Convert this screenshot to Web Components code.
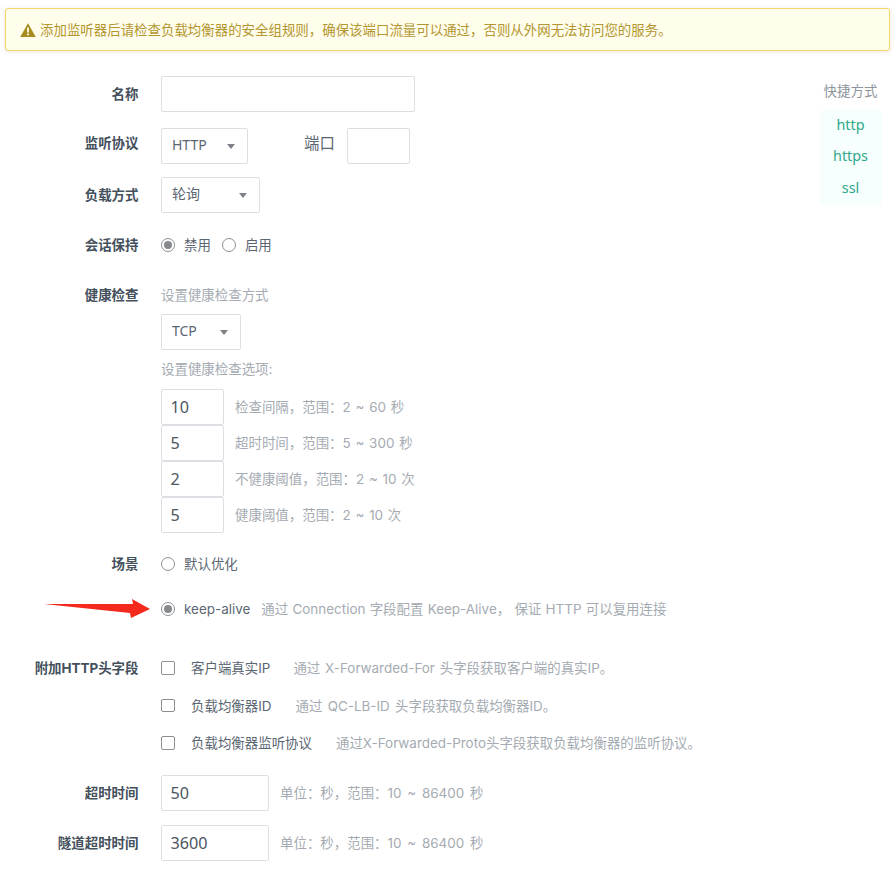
<!DOCTYPE html>
<html lang="zh-CN">
<head>
<meta charset="utf-8">
<style>
html,body{margin:0;padding:0;background:#fff}
body{font:13.45px/24px Inter,"Noto Sans CJK SC",sans-serif;color:#5b6672}
</style>
</head>
<body>
<x-app></x-app>
<template id="t-app">
<style>
:host{display:block;width:895px;height:874px;overflow:hidden;box-sizing:border-box;padding-top:8px}
.main{display:flex;align-items:flex-start;padding-top:25px}
.form{flex:1;min-width:0}
x-aside{margin-right:13.5px}
.m16{margin-top:16px}.m13{margin-top:13px}.m20{margin-top:20px}.m26{margin-top:26px}.m19{margin-top:19px}.m35{margin-top:35px}.m14{margin-top:14px}
.line{display:flex;align-items:center;gap:0}
.stack{display:flex;flex-direction:column;align-items:flex-start}
.port{font-size:15.4px;color:#5b6672;margin:-5px 12px 0 56px}
.opts{display:flex;flex-direction:column;margin-top:8px}
.opt{display:flex;align-items:center;gap:11px}
.opt x-hint{word-spacing:1px}
.chk{display:flex;flex-direction:column;gap:13.5px}
.t x-hint{margin-left:11px;word-spacing:2px}
</style>
<x-alert>添加监听器后请检查负载均衡器的安全组规则，确保该端口流量可以通过，否则从外网无法访问您的服务。</x-alert>
<div class="main">
<div class="form">
<x-row label="名称" h="36"><x-input w="254"></x-input></x-row>
<x-row class="m16" label="监听协议" h="30"><div class="line"><x-select w="87">HTTP</x-select><span class="port">端口</span><x-input w="63"></x-input></div></x-row>
<x-row class="m13" label="负载方式" h="36"><x-select w="99">轮询</x-select></x-row>
<x-row class="m20" label="会话保持" h="24"><div class="line"><x-radio checked>禁用</x-radio><x-radio style="margin-left:11px">启用</x-radio></div></x-row>
<x-row class="m26" label="健康检查" h="24">
  <div class="stack">
    <x-hint>设置健康检查方式</x-hint>
    <x-select w="80" style="margin-top:7px">TCP</x-select>
    <x-hint style="margin-top:7px">设置健康检查选项:</x-hint>
    <div class="opts">
      <div class="opt"><x-input w="63" value="10"></x-input><x-hint>检查间隔，范围：2 ~ 60 秒</x-hint></div>
      <div class="opt"><x-input w="63" value="5"></x-input><x-hint>超时时间，范围：5 ~ 300 秒</x-hint></div>
      <div class="opt"><x-input w="63" value="2"></x-input><x-hint>不健康阈值，范围：2 ~ 10 次</x-hint></div>
      <div class="opt"><x-input w="63" value="5"></x-input><x-hint>健康阈值，范围：2 ~ 10 次</x-hint></div>
    </div>
  </div>
</x-row>
<x-row class="m19" label="场景" h="24"><x-radio>默认优化</x-radio></x-row>
<x-row style="margin-top:19px;position:relative" h="24"><x-arrow></x-arrow><div class="line"><x-radio checked>keep-alive</x-radio><x-hint style="margin-left:11px;word-spacing:.5px">通过 Connection 字段配置 Keep-Alive， 保证 HTTP 可以复用连接</x-hint></div></x-row>
<x-row class="m35" label="附加HTTP头字段" h="24">
  <div class="chk">
    <div class="line"><x-check>客户端真实IP</x-check><x-hint style="margin-left:23px;word-spacing:1px">通过 X-Forwarded-For 头字段获取客户端的真实IP。</x-hint></div>
    <div class="line"><x-check>负载均衡器ID</x-check><x-hint style="margin-left:24px;word-spacing:1.5px">通过 QC-LB-ID 头字段获取负载均衡器ID。</x-hint></div>
    <div class="line"><x-check>负载均衡器监听协议</x-check><x-hint style="margin-left:24px">通过X-Forwarded-Proto头字段获取负载均衡器的监听协议。</x-hint></div>
  </div>
</x-row>
<x-row class="m20" label="超时时间" h="36"><div class="line t"><x-input w="108" value="50"></x-input><x-hint>单位：秒，范围：10 ~ 86400 秒</x-hint></div></x-row>
<x-row class="m14" label="隧道超时时间" h="36"><div class="line t"><x-input w="108" value="3600"></x-input><x-hint>单位：秒，范围：10 ~ 86400 秒</x-hint></div></x-row>
</div>
<x-aside></x-aside>
</div>
</template>
<script>
function def(name, html, setup){
  customElements.define(name, class extends HTMLElement{
    constructor(){super();this.attachShadow({mode:'open'}).innerHTML=html;}
    connectedCallback(){ if(setup) setup(this, this.shadowRoot); }
  });
}
customElements.define('x-app', class extends HTMLElement{
  constructor(){super();this.attachShadow({mode:'open'}).appendChild(document.getElementById('t-app').content.cloneNode(true));}
});
def('x-alert',`<style>
:host{display:flex;align-items:center;box-sizing:border-box;margin:0 5px 0 5px;height:43px;padding:0 14px;gap:4px;background:#fffdec;border:1px solid #f4d669;border-radius:3px;box-shadow:0 1px 5px rgba(170,160,110,.25);color:#b3962f}
svg{width:16px;height:14px;flex:none}
</style><svg viewBox="0 0 16 14"><path d="M8 0.3 15.8 14H0.2Z" fill="#a88c1f"/><rect x="7.1" y="4.5" width="1.8" height="5" fill="#fffdec"/><rect x="7.1" y="10.5" width="1.8" height="1.8" fill="#fffdec"/></svg><slot></slot>`);
def('x-row',`<style>
:host{display:grid;grid-template-columns:138.5px 1fr;column-gap:22.5px;align-items:start}
.l{font-weight:700;color:#44505c;text-align:right;white-space:nowrap}
</style><div class="l"></div><div class="c"><slot></slot></div>`,(el,s)=>{
  const l=s.querySelector('.l');l.textContent=el.getAttribute('label')||'';
  l.style.lineHeight=(el.getAttribute('h')||24)+'px';
});
def('x-input',`<style>
:host{display:block;flex:none;font-family:"Noto Sans","Noto Sans CJK SC",sans-serif}
.b{box-sizing:border-box;height:36px;border:1px solid #dcdfe3;border-radius:2px;background:#fff;padding-left:8.5px;font-size:16.2px;line-height:34px;color:#4b5661}
</style><div class="b"></div>`,(el,s)=>{
  const b=s.querySelector('.b');b.style.width=el.getAttribute('w')+'px';b.textContent=el.getAttribute('value')||'';
});
def('x-select',`<style>
:host{display:block;flex:none;font-family:"Noto Sans","Noto Sans CJK SC",sans-serif}
.b{box-sizing:border-box;height:36px;border:1px solid #dcdfe3;border-radius:2px;background:#fff;padding:0 12.5px 0 10px;display:flex;align-items:center;justify-content:space-between;font-size:14px;color:#5b6672}
span{position:relative;top:-1px}
i{width:0;height:0;border:4.5px solid transparent;border-top:5px solid #7d8288;border-bottom:0}
</style><div class="b"><span><slot></slot></span><i></i></div>`,(el,s)=>{
  s.querySelector('.b').style.width=el.getAttribute('w')+'px';
});
def('x-radio',`<style>
:host{display:inline-flex;align-items:center;gap:9px;color:#5b6672;white-space:nowrap}
i{box-sizing:border-box;width:14px;height:14px;border-radius:50%;border:1px solid #8b8f94;display:flex;align-items:center;justify-content:center;flex:none}
b{width:8px;height:8px;border-radius:50%;background:#85888c;display:none}
:host([checked]) b{display:block}
</style><i><b></b></i><span><slot></slot></span>`);
def('x-check',`<style>
:host{display:inline-flex;align-items:center;gap:16.5px;color:#5b6672;white-space:nowrap}
i{box-sizing:border-box;width:13.5px;height:13.5px;border-radius:2px;border:1px solid #8b8f94;flex:none}
</style><i></i><span><slot></slot></span>`);
def('x-hint',`<style>:host{display:inline-block;color:#a5abb2;white-space:nowrap}</style><slot></slot>`);
def('x-arrow',`<style>
:host{position:absolute;left:44px;top:1px;width:108px;height:22px;display:block}
svg{display:block}
</style><svg width="108" height="22" viewBox="0 0 108 22"><path d="M0 6 89 6 88 1 106 11 87 20 86 15Z" fill="#f5291c"/></svg>`);
def('x-aside',`<style>
:host{display:block;width:62px;flex:none;text-align:center}
.t{line-height:30px;color:#8e959c}
.box{margin-top:4px;background:#f6fffd;border-radius:3px;padding-bottom:1px;color:#2fa98a;font-size:14.4px;font-family:"Noto Sans",sans-serif}
.box div{line-height:31px;position:relative;top:-1px}
.box div:last-child{margin-top:1px}
</style><div class="t">快捷方式</div><div class="box"><div>http</div><div>https</div><div>ssl</div></div>`);
</script>
</body>
</html>
